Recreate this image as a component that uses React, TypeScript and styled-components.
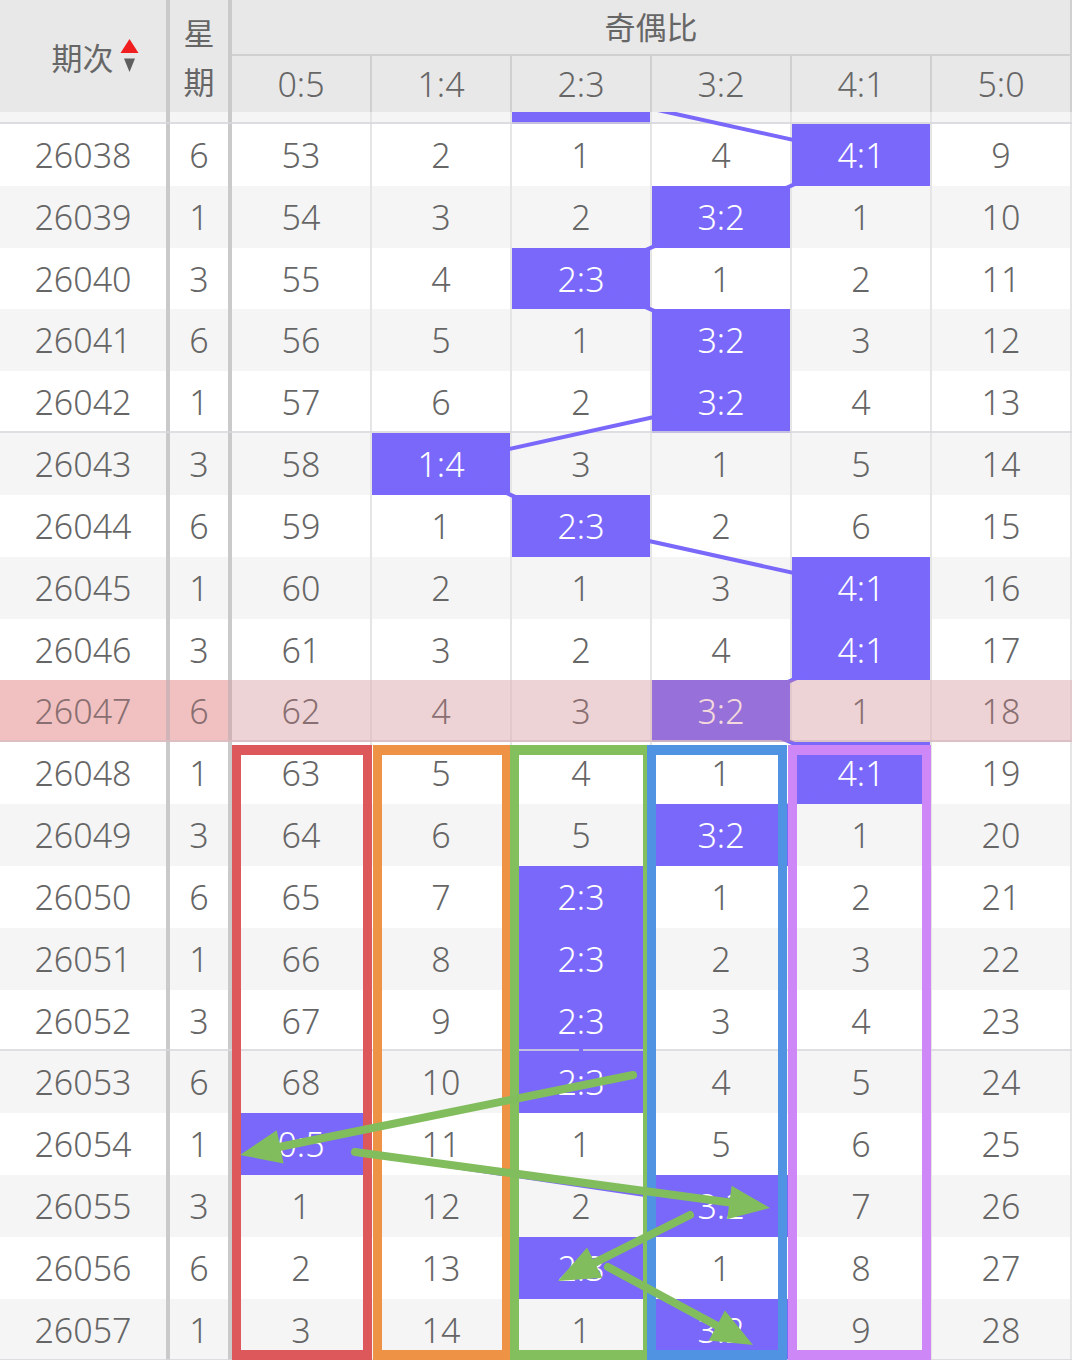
import React from 'react';
import styled, { createGlobalStyle, css } from 'styled-components';

const ROW_H = 61.84;
const HEAD_H = 112;
const TAIL_H = 12; // visible sliver of the row scrolled under the header
const PURPLE = '#7a68fb';
const COLS = '170px 62px repeat(6, 140px)';
const RATIOS = ['0:5', '1:4', '2:3', '3:2', '4:1', '5:0'];

type Raw = [string, number, number, number[]];

const raw: Raw[] = [
  ['26037', 3, 2, [52, 1, 0, 3, 6, 8]],
  ['26038', 6, 4, [53, 2, 1, 4, 0, 9]],
  ['26039', 1, 3, [54, 3, 2, 0, 1, 10]],
  ['26040', 3, 2, [55, 4, 0, 1, 2, 11]],
  ['26041', 6, 3, [56, 5, 1, 0, 3, 12]],
  ['26042', 1, 3, [57, 6, 2, 0, 4, 13]],
  ['26043', 3, 1, [58, 0, 3, 1, 5, 14]],
  ['26044', 6, 2, [59, 1, 0, 2, 6, 15]],
  ['26045', 1, 4, [60, 2, 1, 3, 0, 16]],
  ['26046', 3, 4, [61, 3, 2, 4, 0, 17]],
  ['26047', 6, 3, [62, 4, 3, 0, 1, 18]],
  ['26048', 1, 4, [63, 5, 4, 1, 0, 19]],
  ['26049', 3, 3, [64, 6, 5, 0, 1, 20]],
  ['26050', 6, 2, [65, 7, 0, 1, 2, 21]],
  ['26051', 1, 2, [66, 8, 0, 2, 3, 22]],
  ['26052', 3, 2, [67, 9, 0, 3, 4, 23]],
  ['26053', 6, 2, [68, 10, 0, 4, 5, 24]],
  ['26054', 1, 0, [0, 11, 1, 5, 6, 25]],
  ['26055', 3, 3, [1, 12, 2, 0, 7, 26]],
  ['26056', 6, 2, [2, 13, 0, 1, 8, 27]],
  ['26057', 1, 3, [3, 14, 1, 0, 9, 28]],
];

const PINK_INDEX = 10;

const boxes = [
  { left: 232, width: 140, color: '#dc585b' },
  { left: 373, width: 138, color: '#ee9346' },
  { left: 510, width: 142, color: '#84bf5e' },
  { left: 647, width: 140, color: '#5193e3' },
  { left: 788, width: 143, color: '#cd87f6' },
];

const arrows: [number, number, number, number][] = [
  [633, 1075, 240, 1155],
  [355, 1152, 770, 1208],
  [690, 1215, 558, 1281],
  [608, 1267, 753, 1345],
];

const GlobalStyle = createGlobalStyle`
  html, body {
    margin: 0;
    padding: 0;
    background: #ffffff;
  }
  body {
    font-family: "Noto Sans", "Noto Sans CJK SC", sans-serif;
  }
`;

const Page = styled.div`
  width: 1076px;
  height: 1360px;
  overflow: hidden;
  background: #ffffff;
`;

const Table = styled.div`
  width: 1072px;
  height: 1360px;
  display: flex;
  flex-direction: column;
`;

const Header = styled.div`
  display: grid;
  grid-template-columns: ${COLS};
  grid-template-rows: 56px 56px;
  height: ${HEAD_H}px;
  background: #e8e8e8;
  color: #666666;
  flex: none;
  position: relative;
  z-index: 10;
`;

const IssueHead = styled.div`
  grid-row: 1 / 3;
  grid-column: 1;
  box-sizing: border-box;
  border-right: 4px solid #cacaca;
  display: flex;
  align-items: center;
  justify-content: center;
  padding-left: 24px;
  font-family: "Noto Sans CJK SC", sans-serif;
  font-size: 31px;
  line-height: 1;
`;

const SortIcon = styled.svg`
  width: 19px;
  height: 38px;
  margin-left: 6px;
  flex: none;
`;

const WeekHead = styled.div`
  grid-row: 1 / 3;
  grid-column: 2;
  box-sizing: border-box;
  border-right: 4px solid #cacaca;
  display: flex;
  flex-direction: column;
  align-items: center;
  justify-content: center;
  font-family: "Noto Sans CJK SC", sans-serif;
  font-size: 31px;
  line-height: 49px;
`;

const GroupHead = styled.div`
  grid-row: 1;
  grid-column: 3 / 9;
  box-sizing: border-box;
  border-bottom: 2px solid #d0d0d0;
  border-right: 2px solid #d0d0d0;
  display: flex;
  align-items: center;
  justify-content: center;
  padding-bottom: 3px;
  font-family: "Noto Sans CJK SC", sans-serif;
  font-size: 31px;
  line-height: 1;
`;

const SubHead = styled.div`
  grid-row: 2;
  box-sizing: border-box;
  border-right: 2px solid #d0d0d0;
  display: flex;
  align-items: center;
  justify-content: center;
  font-size: 34px;
  font-weight: 350;
  line-height: 1;
`;

const BodyViewport = styled.div`
  flex: 1;
  overflow: hidden;
  position: relative;
`;

const BodyContent = styled.div`
  position: relative;
  isolation: isolate;
`;

const Row = styled.div<{ $gray: boolean; $groupEnd: boolean; $pink: boolean; $tail: boolean }>`
  position: relative;
  display: grid;
  grid-template-columns: ${COLS};
  height: ${(p) => (p.$tail ? TAIL_H : ROW_H)}px;
  background: ${(p) => (p.$gray ? '#f5f5f5' : '#ffffff')};
  ${(p) =>
    p.$groupEnd &&
    css`
      &::after {
        content: '';
        position: absolute;
        left: 0;
        right: 0;
        bottom: 0;
        height: 2px;
        background: rgba(214, 214, 220, 0.8);
        z-index: 0;
      }
    `}
  ${(p) =>
    p.$pink &&
    css`
      &::before {
        content: '';
        position: absolute;
        inset: 0;
        background: rgba(218, 132, 138, 0.3);
        z-index: 3;
      }
    `}
`;

const Cell = styled.div<{ $hit?: boolean; $fixed?: boolean; $pinkFixed?: boolean }>`
  box-sizing: border-box;
  display: flex;
  align-items: center;
  justify-content: center;
  font-size: 34px;
  font-weight: 350;
  line-height: 1;
  color: ${(p) => (p.$hit ? '#ffffff' : '#666666')};
  background: ${(p) => (p.$hit ? PURPLE : p.$pinkFixed ? '#fbdcd9' : 'transparent')};
  border-right: ${(p) => (p.$fixed ? '4px solid #cacaca' : '2px solid #e5e5e5')};
`;

const CellText = styled.span`
  position: relative;
  z-index: 2;
`;

const Overlay = styled.svg<{ $z: number }>`
  position: absolute;
  left: 0;
  top: 0;
  width: 1072px;
  height: ${1360 - HEAD_H}px;
  z-index: ${(p) => p.$z};
  pointer-events: none;
  overflow: visible;
`;

const MarkBox = styled.div<{ $color: string }>`
  position: absolute;
  box-sizing: border-box;
  top: ${745 - HEAD_H}px;
  height: 615px;
  border: 9px solid ${(p) => p.$color};
  border-top-width: 10px;
  border-bottom-width: 10px;
  z-index: 4;
  pointer-events: none;
`;

// absolute page coordinates of cell centres
const cx = (k: number) => 301 + 140 * k;
const cy = (i: number) => HEAD_H + TAIL_H + (i - 1) * ROW_H + ROW_H / 2;

function arrowParts(x1: number, y1: number, x2: number, y2: number) {
  const dx = x2 - x1;
  const dy = y2 - y1;
  const len = Math.hypot(dx, dy);
  const ux = dx / len;
  const uy = dy / len;
  const L = 41;
  const W = 17;
  const bx = x2 - ux * L;
  const by = y2 - uy * L;
  const px = -uy;
  const py = ux;
  const lx = x2 - ux * (L - 6);
  const ly = y2 - uy * (L - 6);
  return {
    line: { x1, y1, x2: lx, y2: ly },
    head: `${x2},${y2} ${bx + px * W},${by + py * W} ${bx - px * W},${by - py * W}`,
  };
}

export default function App() {
  return (
    <Page>
      <GlobalStyle />
      <Table>
        <Header>
          <IssueHead>
            <span>期次</span>
            <SortIcon viewBox="0 0 19 38">
              <polygon points="0.5,16 9.5,2 18.5,16" fill="#f01e1e" />
              <polygon points="4,21.5 15,21.5 9.5,35" fill="#5f5f5f" />
            </SortIcon>
          </IssueHead>
          <WeekHead>
            <span>星</span>
            <span>期</span>
          </WeekHead>
          <GroupHead>奇偶比</GroupHead>
          {RATIOS.map((r) => (
            <SubHead key={r}>{r}</SubHead>
          ))}
        </Header>
        <BodyViewport>
          <BodyContent>
            {raw.map(([issue, week, hit, vals], i) => {
              const pink = i === PINK_INDEX;
              const tail = i === 0;
              return (
                <Row
                  key={issue}
                  $gray={i % 2 === 0}
                  $groupEnd={i % 5 === 0}
                  $pink={pink}
                  $tail={tail}
                >
                  <Cell $fixed $pinkFixed={pink}>
                    {!tail && <CellText>{issue}</CellText>}
                  </Cell>
                  <Cell $fixed $pinkFixed={pink}>
                    {!tail && <CellText>{week}</CellText>}
                  </Cell>
                  {vals.map((v, k) => (
                    <Cell key={k} $hit={k === hit}>
                      {!tail && <CellText>{k === hit ? RATIOS[k] : v}</CellText>}
                    </Cell>
                  ))}
                </Row>
              );
            })}
            <Overlay $z={1}>
              <g transform={`translate(0 ${-HEAD_H})`}>
                {raw.slice(1).map((r, j) => {
                  const prev = raw[j];
                  return (
                    <line
                      key={r[0]}
                      x1={cx(prev[2])}
                      y1={cy(j)}
                      x2={cx(r[2])}
                      y2={cy(j + 1)}
                      stroke={PURPLE}
                      strokeWidth={4}
                    />
                  );
                })}
              </g>
            </Overlay>
            {boxes.map((b) => (
              <MarkBox
                key={b.color}
                $color={b.color}
                style={{ left: b.left, width: b.width }}
              />
            ))}
            <Overlay $z={5}>
              <g transform={`translate(0 ${-HEAD_H})`}>
                {arrows.map(([x1, y1, x2, y2], n) => {
                  const a = arrowParts(x1, y1, x2, y2);
                  return (
                    <g key={n}>
                      <line
                        {...a.line}
                        stroke="#82bd5d"
                        strokeWidth={8}
                        strokeLinecap="round"
                      />
                      <polygon points={a.head} fill="#82bd5d" />
                    </g>
                  );
                })}
              </g>
            </Overlay>
          </BodyContent>
        </BodyViewport>
      </Table>
    </Page>
  );
}
